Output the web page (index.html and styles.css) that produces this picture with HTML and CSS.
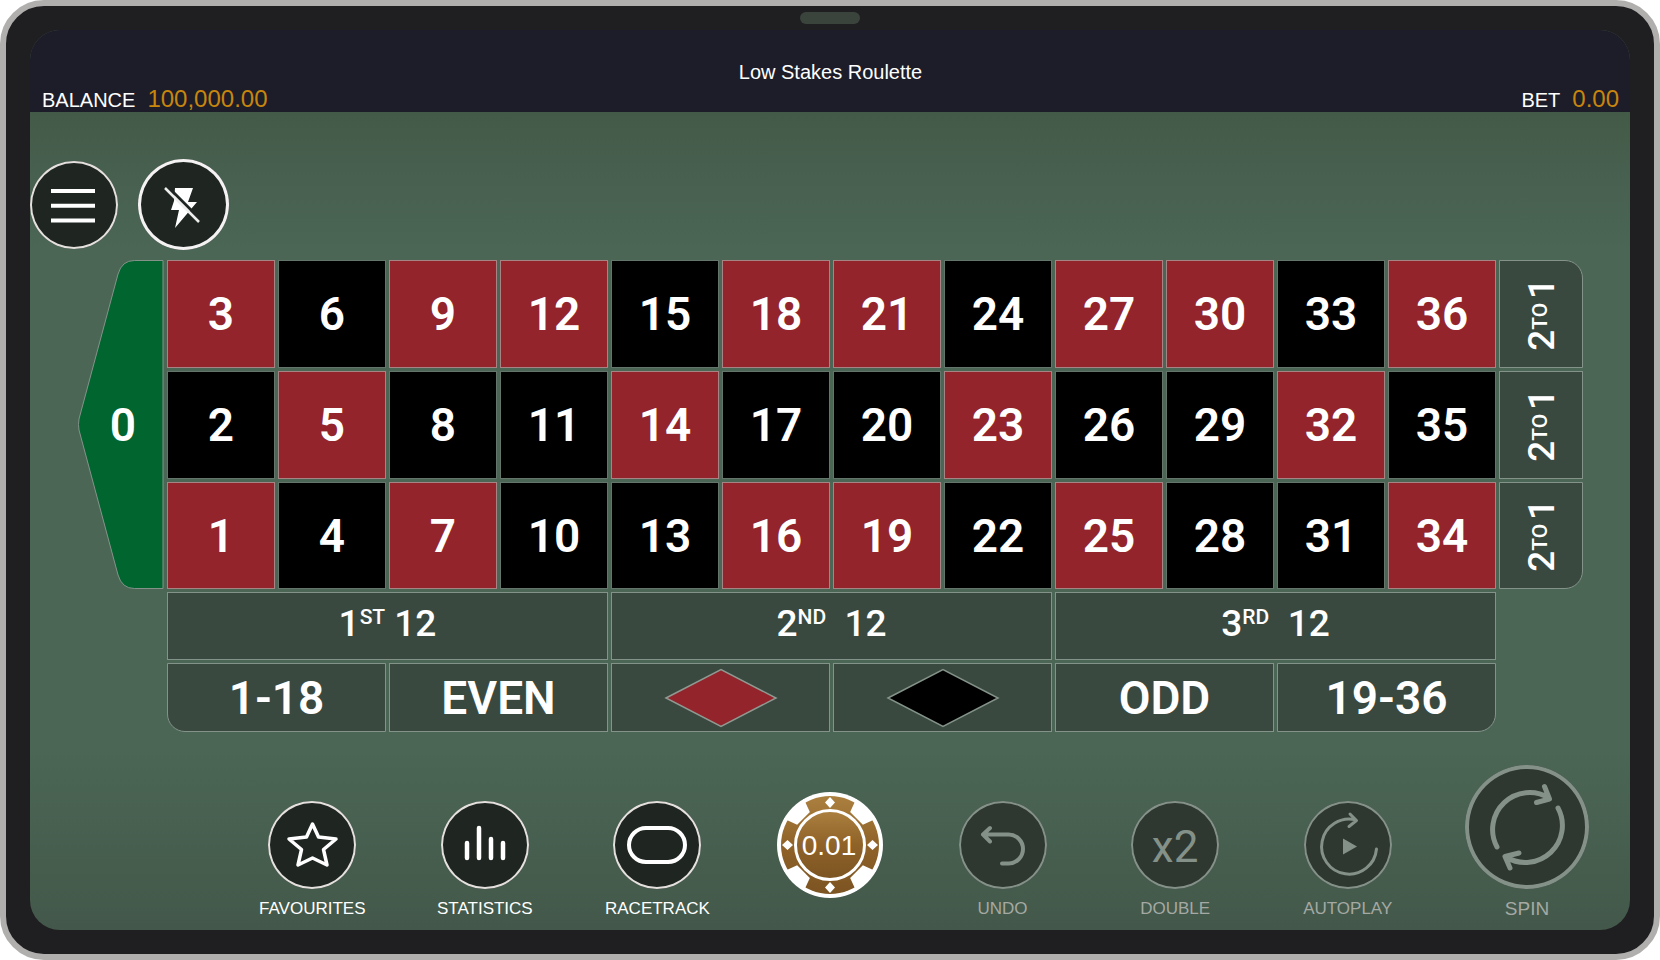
FILE: index.html
```
<!DOCTYPE html>
<html lang="en">
<head>
<meta charset="utf-8">
<title>Low Stakes Roulette</title>
<link rel="stylesheet" href="styles.css">
</head>
<body>
<div class="device">
  <div class="speaker"></div>
  <main class="screen">
    <header class="topbar">
      <h1 class="title">Low Stakes Roulette</h1>
      <div class="meters">
        <div class="meter"><span class="meter-label">BALANCE</span><span class="meter-value">100,000.00</span></div>
        <div class="meter"><span class="meter-label">BET</span><span class="meter-value">0.00</span></div>
      </div>
    </header>

    <div class="quick">
      <button class="round" aria-label="Menu">
        <svg viewBox="0 0 88 88"><path d="M21 30H65M21 44.700H65M21 59.500H65" stroke="#fff" stroke-width="4"/></svg>
      </button>
      <button class="round round-quick" aria-label="Quick spin off">
        <svg viewBox="0 0 91 91"><path d="M37 29H55L50 43H59L37 69L41 51H33L36 42Z" fill="#fff"/><path d="M29 27L63 61" stroke="#1f2622" stroke-width="3"/><path d="M27 29L61 63" stroke="#eee" stroke-width="2.500"/></svg>
      </button>
    </div>

    <section class="board" id="board" aria-label="Betting table">
      <button class="zero">
        <svg class="zero-shape" viewBox="0 0 87 329" preserveAspectRatio="none"><path d="M86 .5H57Q44.500 .5 40.500 14L1 159Q0 164.500 1 170L40.500 315Q44.500 328.500 57 328.500H86Z" fill="#00652f" stroke="#84938a" vector-effect="non-scaling-stroke"/></svg>
        <span class="zero-text">0</span>
      </button>
      <button class="cell red">3</button><button class="cell black">6</button><button class="cell red">9</button><button class="cell red">12</button><button class="cell black">15</button><button class="cell red">18</button><button class="cell red">21</button><button class="cell black">24</button><button class="cell red">27</button><button class="cell red">30</button><button class="cell black">33</button><button class="cell red">36</button>
      <button class="cell column-bet corner-tr"><span class="turned">2<small>TO</small>&#8202;1</span></button>
      <button class="cell black">2</button><button class="cell red">5</button><button class="cell black">8</button><button class="cell black">11</button><button class="cell red">14</button><button class="cell black">17</button><button class="cell black">20</button><button class="cell red">23</button><button class="cell black">26</button><button class="cell black">29</button><button class="cell red">32</button><button class="cell black">35</button>
      <button class="cell column-bet"><span class="turned">2<small>TO</small>&#8202;1</span></button>
      <button class="cell red">1</button><button class="cell black">4</button><button class="cell red">7</button><button class="cell black">10</button><button class="cell black">13</button><button class="cell red">16</button><button class="cell red">19</button><button class="cell black">22</button><button class="cell red">25</button><button class="cell black">28</button><button class="cell black">31</button><button class="cell red">34</button>
      <button class="cell column-bet corner-br"><span class="turned">2<small>TO</small>&#8202;1</span></button>
      <button class="cell dozen dozen-first"><span>1<small>ST</small> 12</span></button>
      <button class="cell dozen"><span>2<small>ND</small>&nbsp; 12</span></button>
      <button class="cell dozen"><span>3<small>RD</small>&nbsp; 12</span></button>
      <button class="cell even even-first corner-bl">1-18</button>
      <button class="cell even">EVEN</button>
      <button class="cell even" aria-label="Red"><svg class="diamond" viewBox="0 0 114 60"><path d="M2 30L57 1.500L112 30L57 58.500Z" fill="#93242b" stroke="#8f9a92" stroke-width="1.500"/></svg></button>
      <button class="cell even" aria-label="Black"><svg class="diamond" viewBox="0 0 114 60"><path d="M2 30L57 1.500L112 30L57 58.500Z" fill="#000" stroke="#84938a" stroke-width="1.500"/></svg></button>
      <button class="cell even">ODD</button>
      <button class="cell even corner-br">19-36</button>
    </section>

    <nav class="toolbar" aria-label="Game actions">
      <button class="tool">
        <span class="round"><svg viewBox="0 0 88 88"><path d="M44.500 23L50.500 36L68 38L55.500 48.500L59 64L44.500 57L30 64L33.500 48.500L21 38L38.500 36Z" fill="none" stroke="#fff" stroke-width="3.500" stroke-linejoin="round"/></svg></span>
        <span class="tool-label">FAVOURITES</span>
      </button>
      <button class="tool">
        <span class="round"><svg viewBox="0 0 88 88"><path d="M26 42V57M38 27V57M50 38V57M62 42V57" stroke="#fff" stroke-width="4.500" stroke-linecap="round"/></svg></span>
        <span class="tool-label">STATISTICS</span>
      </button>
      <button class="tool">
        <span class="round"><svg viewBox="0 0 88 88"><rect x="16" y="27" width="56" height="34" rx="17" fill="none" stroke="#fff" stroke-width="4"/></svg></span>
        <span class="tool-label">RACETRACK</span>
      </button>
      <button class="tool tool-chip">
        <svg class="chip" viewBox="0 0 106 106" aria-hidden="true">
          <defs><linearGradient id="gold" x1="0" y1="0" x2="0" y2="1"><stop offset="0" stop-color="#ab803f"/><stop offset=".5" stop-color="#8f6228"/><stop offset="1" stop-color="#7c5422"/></linearGradient></defs>
          <circle cx="53" cy="53" r="53" fill="#fff"/>
          <circle cx="53" cy="53" r="49" fill="url(#gold)"/>
          <g fill="#fff">
            <path d="M44 15.500H62L67 2H39Z" transform="rotate(45 53 53)"/>
            <path d="M44 15.500H62L67 2H39Z" transform="rotate(135 53 53)"/>
            <path d="M44 15.500H62L67 2H39Z" transform="rotate(225 53 53)"/>
            <path d="M44 15.500H62L67 2H39Z" transform="rotate(315 53 53)"/>
            <path d="M53 5L58 10.500L53 16L48 10.500ZM53 90L58 95.500L53 101L48 95.500ZM5 53L10.500 48L16 53L10.500 58ZM90 53L95.500 48L101 53L95.500 58Z"/>
          </g>
          <circle cx="53" cy="53" r="34.500" fill="url(#gold)" stroke="#fff" stroke-width="3"/>
          <text x="52" y="63" text-anchor="middle" class="chip-text">0.01</text>
        </svg>
      </button>
      <button class="tool" disabled>
        <span class="round"><svg viewBox="0 0 88 88"><path d="M31 27L24 33.500L31 40.500M24 33.500H49.500A14.500 14.500 0 0 1 49.500 62.500H43" fill="none" stroke="#849188" stroke-width="4" stroke-linecap="round" stroke-linejoin="round"/></svg></span>
        <span class="tool-label">UNDO</span>
      </button>
      <button class="tool" disabled>
        <span class="round"><span class="times">x2</span></span>
        <span class="tool-label">DOUBLE</span>
      </button>
      <button class="tool" disabled>
        <span class="round"><svg viewBox="0 0 88 88"><path d="M46 13L52.500 19.500L45 25.500M52 19A27.500 27.500 0 1 0 72.500 48" fill="none" stroke="#849188" stroke-width="3" stroke-linecap="round" stroke-linejoin="round"/><path d="M39 37.500L53 45.500L39 53.500Z" fill="#849188"/></svg></span>
        <span class="tool-label">AUTOPLAY</span>
      </button>
      <button class="tool tool-spin" disabled>
        <span class="round"><svg viewBox="0 0 124 124"><path d="M32 82A37 37 0 0 1 84 33M79.500 21.500L84.500 34L71.500 37.500M93 43A37 37 0 0 1 41 92M45 103L40 91.500L54 88" fill="none" stroke="#849188" stroke-width="5" stroke-linecap="round" stroke-linejoin="round"/></svg></span>
        <span class="tool-label">SPIN</span>
      </button>
    </nav>
  </main>
</div>
</body>
</html>
```
FILE: styles.css
```
* {
  box-sizing: border-box;
}

body {
  margin: 0;
  background: #fff;
  font-family: "Liberation Sans", Arial, sans-serif;
  color: #fff;
}

button {
  margin: 0;
  padding: 0;
  border: 0;
  background: none;
  color: inherit;
  font: inherit;
}

svg {
  display: block;
}

.device {
  display: flex;
  flex-direction: column;
  min-height: 100vh;
  padding: 0 24px 24px;
  border: 6px solid #b0afad;
  border-radius: 44px;
  background: #1f1f21;
}

.speaker {
  width: 60px;
  height: 12px;
  margin: 6px auto;
  border-radius: 6px;
  background: #3a443d;
}

.screen {
  flex: 1;
  display: flex;
  flex-direction: column;
  overflow: hidden;
  border-radius: 30px;
  background: linear-gradient(#445a49 82px, #4b6655 220px, #4b6655 720px, #43584a 100%);
}

.topbar {
  padding: 32px 11px 0 12px;
  background: #1d1d29;
}

.title {
  margin: 0;
  font-size: 20px;
  font-weight: 400;
  line-height: 20px;
  text-align: center;
}

.meters {
  display: flex;
  justify-content: space-between;
  padding-top: 5px;
}

.meter {
  display: flex;
  align-items: baseline;
  gap: 12px;
  line-height: 24px;
}

.meter-label {
  font-size: 20px;
}

.meter-value {
  font-size: 24px;
  color: #c8860d;
}

.quick {
  display: flex;
  align-items: center;
  gap: 20px;
  padding: 47px 0 10px;
}

.round {
  display: grid;
  place-items: center;
  width: 88px;
  height: 88px;
  border-radius: 50%;
  background: #1f2622;
  box-shadow: inset 0 0 0 2px #e4e0de;
}

.round svg {
  width: 100%;
}

.round-quick {
  width: 91px;
  height: 91px;
  box-shadow: inset 0 0 0 3px #f4f2f2;
}

.board {
  display: grid;
  grid-template-columns: 86px repeat(12, minmax(0, 1fr)) 84px;
  grid-template-rows: 108px 108px 107px 68px 69px;
  gap: 3px;
  margin: 0 47px 0 48px;
  font-family: Roboto, sans-serif;
  font-size: 46px;
  font-weight: 600;
}

.zero {
  position: relative;
  grid-row: span 3;
}

.zero-shape {
  position: absolute;
  inset: 0;
  width: 100%;
  height: 100%;
}

.zero-text {
  position: relative;
  padding-left: 4px;
}

.cell {
  display: grid;
  place-items: center;
  border: 1px solid #84938a;
  background: #3a493f;
  line-height: 48px;
}

.red {
  border-color: #a58483;
  background: #93242b;
}

.black {
  border-color: #64766b;
  background: #000;
}

.column-bet,
.dozen {
  font-size: 37px;
  font-weight: 500;
}

.cell small {
  font-size: 21px;
}

.turned {
  writing-mode: vertical-rl;
  transform: rotate(180deg);
}

.turned small {
  vertical-align: 2px;
}

.dozen {
  grid-column: span 4;
  padding-bottom: 5px;
}

.dozen small {
  vertical-align: 12px;
  line-height: 0;
}

.dozen-first {
  grid-column: 2 / span 4;
}

.even {
  grid-column: span 2;
}

.even-first {
  grid-column: 2 / span 2;
}

.corner-tr {
  border-top-right-radius: 18px;
}

.corner-br {
  border-bottom-right-radius: 18px;
}

.corner-bl {
  border-bottom-left-radius: 18px;
}

.diamond {
  width: 114px;
}

.toolbar {
  display: grid;
  grid-template-columns: repeat(7, minmax(0, 1fr)) 186px;
  align-items: end;
  margin-top: auto;
  padding: 0 10px 11px 196px;
}

.tool {
  display: flex;
  flex-direction: column;
  align-items: center;
  gap: 10px;
}

.tool-label {
  font-size: 17px;
  line-height: 20px;
}

.tool:disabled {
  color: #a5a9a3;
}

.tool:disabled .round {
  background: #2e3730;
  box-shadow: inset 0 0 0 2px #849188;
}

.times {
  padding-top: 4px;
  font-family: Roboto, sans-serif;
  font-size: 44px;
  font-weight: 400;
  color: #849188;
}

.tool-chip {
  padding-bottom: 21px;
}

.chip {
  width: 106px;
}

.chip-text {
  font-size: 28px;
  fill: #fff;
}

.tool-spin .round {
  width: 124px;
  height: 124px;
}

.tool-spin:disabled .round {
  box-shadow: inset 0 0 0 4px #849188;
}

.tool-spin .tool-label {
  font-size: 19px;
}
```
